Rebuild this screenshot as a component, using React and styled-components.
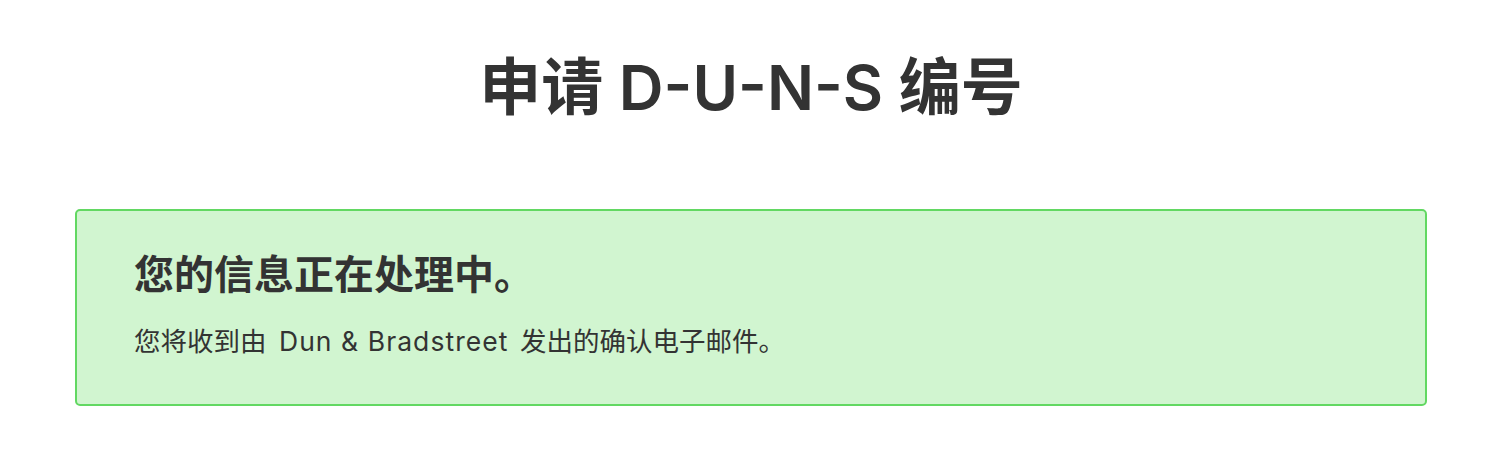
import React from 'react';
import styled, { createGlobalStyle } from 'styled-components';

const GlobalStyle = createGlobalStyle`
    html, body {
        margin : 0;
        padding : 0;
        background : #ffffff;
    }
    body {
        font-family : Inter, "Noto Sans CJK SC", sans-serif;
        color : #333333;
    }
`;

const Page = styled.div`
    display : flex;
    flex-direction : column;
    padding : 49px 73px 0 75px;
`;

const Title = styled.h1`
    margin : 0 0 83px 0;
    text-align : center;
    font-size : 62px;
    line-height : 77px;
    font-weight : 600;
    color : #333333;
`;

const Alert = styled.div`
    display : flex;
    flex-direction : column;
    gap : 23px;
    padding : 40px 57px 43px 57px;
    background : #d1f5d0;
    border : 2px solid #62d862;
    border-radius : 5px;
`;

const AlertHeading = styled.h3`
    margin : 0;
    font-size : 40px;
    line-height : 48px;
    font-weight : 700;
    color : #333333;
`;

const AlertText = styled.p`
    margin : 0;
    font-size : 26.5px;
    line-height : 39px;
    font-weight : 400;
    color : #333333;
`;

const Brand = styled.span`
    padding : 0 4px 0 5px;
    letter-spacing : 0.04em;
`;

export default function App() {
    return (
        <>
            <GlobalStyle />
            <Page>
                <Title>申请 D-U-N-S 编号</Title>
                <Alert>
                    <AlertHeading>您的信息正在处理中。</AlertHeading>
                    <AlertText>您将收到由 <Brand>Dun &amp; Bradstreet</Brand> 发出的确认电子邮件。</AlertText>
                </Alert>
            </Page>
        </>
    );
}
